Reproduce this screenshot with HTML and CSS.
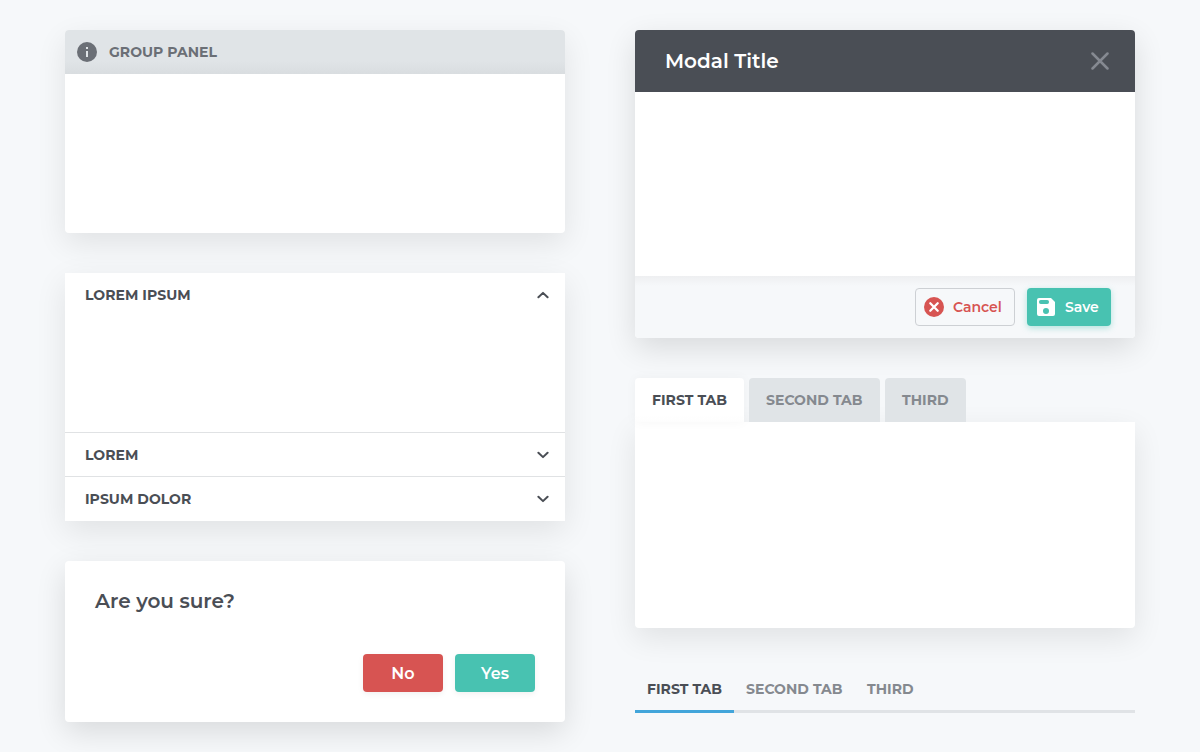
FILE: index.html
```html
<!DOCTYPE html>
<html lang="en">
<head>
<meta charset="utf-8">
<title>Panels</title>
<link rel="stylesheet" href="styles.css">
</head>
<body>
<main class="board">
  <div class="column">
    <section class="card group">
      <header class="group-head">
        <svg class="info" width="20" height="20" viewBox="0 0 20 20"><circle cx="10" cy="10" r="10" fill="#6b6f76"/><path d="M9 5h2v2H9zM9 9h2v6H9z" fill="#e0e4e7"/></svg>
        <span class="label">GROUP PANEL</span>
      </header>
    </section>
    <section class="card accordion">
      <div class="row open"><span class="label">LOREM IPSUM</span><svg width="12" height="8" viewBox="0 0 12 8"><path class="chev" d="M1.400 6.300 6 1.900l4.600 4.400"/></svg></div>
      <div class="row"><span class="label">LOREM</span><svg width="12" height="8" viewBox="0 0 12 8"><path class="chev" d="M1.400 1.700 6 6.100l4.600-4.400"/></svg></div>
      <div class="row"><span class="label">IPSUM DOLOR</span><svg width="12" height="8" viewBox="0 0 12 8"><path class="chev" d="M1.400 1.700 6 6.100l4.600-4.400"/></svg></div>
    </section>
    <section class="card raised confirm">
      <h2 class="title">Are you sure?</h2>
      <div class="actions">
        <button class="btn answer red">No</button>
        <button class="btn answer green">Yes</button>
      </div>
    </section>
  </div>
  <div class="column">
    <section class="card raised modal">
      <header class="modal-head">
        <h2 class="title">Modal Title</h2>
        <svg width="18" height="18" viewBox="0 0 18 18"><path d="M1.500 1.500l15 15M16.500 1.500l-15 15" stroke="#858991" stroke-width="2.500" stroke-linecap="round"/></svg>
      </header>
      <div class="modal-body"></div>
      <footer class="modal-foot">
        <button class="btn cancel">
          <svg width="20" height="20" viewBox="0 0 20 20"><circle cx="10" cy="10" r="10" fill="#d75452"/><path d="M6.300 6.300l7.400 7.400M13.700 6.300l-7.400 7.400" stroke="#fff" stroke-width="2.300" stroke-linecap="round"/></svg>
          <span>Cancel</span>
        </button>
        <button class="btn save">
          <svg width="18" height="18" viewBox="0 0 18 18"><path fill="#fff" fill-rule="evenodd" d="M2 0h12l4 4v12a2 2 0 0 1-2 2H2a2 2 0 0 1-2-2V2a2 2 0 0 1 2-2zM3.800 2a1.800 1.800 0 0 0-1.800 1.900v.2A1.800 1.800 0 0 0 3.800 6h6.400A1.800 1.800 0 0 0 12 4.100v-.2A1.800 1.800 0 0 0 10.200 2zM9 10a3 3 0 1 0 0 6 3 3 0 0 0 0-6z"/></svg>
          <span>Save</span>
        </button>
      </footer>
    </section>
    <section class="tabset">
      <nav class="tabs">
        <div class="tab first active"><span class="label">FIRST TAB</span></div>
        <div class="tab second"><span class="label">SECOND TAB</span></div>
        <div class="tab third"><span class="label">THIRD</span></div>
      </nav>
      <div class="card tab-panel"></div>
    </section>
    <nav class="line-tabs">
      <div class="line-tab active"><span class="label">FIRST TAB</span></div>
      <div class="line-tab wide"><span class="label">SECOND TAB</span></div>
      <div class="line-tab"><span class="label">THIRD</span></div>
    </nav>
  </div>
</main>
</body>
</html>
```
FILE: styles.css
```css
* { box-sizing: border-box; }
body {
  margin: 0;
  height: 752px;
  overflow: hidden;
  background: #f6f8fa;
  color: #4a4e55;
  font-family: Montserrat, Inter, sans-serif;
}
svg { display: block; flex: none; }
span { white-space: nowrap; }
.board { display: flex; gap: 70px; padding: 30px 65px; }
.column { display: flex; flex-direction: column; gap: 40px; width: 500px; }
.card { background: #fff; border-radius: 4px; box-shadow: 0 10px 30px rgba(0, 0, 0, .09); }
.raised { box-shadow: 0 10px 30px rgba(0, 0, 0, .12); }
.label { font-size: 14px; font-weight: 700; line-height: 20px; letter-spacing: .03px; }

.group { height: 203px; }
.group-head {
  display: flex; align-items: center; gap: 12px;
  height: 44px; padding: 0 12px;
  border-radius: 4px 4px 0 0;
  background: linear-gradient(#e0e4e7 70%, #d9dde0);
  color: #6b6f76;
}

.accordion { height: 248px; border-radius: 0; }
.row {
  display: flex; justify-content: space-between; align-items: center;
  height: 44px; padding: 0 16px 0 20px;
  border-top: 1px solid #e0e2e4;
}
.row.open { height: 159px; align-items: flex-start; border: 0; padding-top: 12px; }
.row.open svg { margin-top: 6px; }
.chev { fill: none; stroke: #4a4e55; stroke-width: 2; stroke-linecap: round; stroke-linejoin: round; }

.confirm {
  display: flex; flex-direction: column; justify-content: space-between;
  height: 161px; padding: 25px 30px 30px;
}
.title { margin: 0; font-size: 20px; font-weight: 600; line-height: 30px; }
.actions { display: flex; justify-content: flex-end; gap: 12px; }
.btn {
  display: flex; align-items: center;
  height: 38px; border: 0; border-radius: 4px;
  color: #fff; font: 600 14px/20px Montserrat, Inter, sans-serif;
}
.answer { justify-content: center; width: 80px; padding: 1px 0 0; font-size: 16px; box-shadow: 0 2px 6px rgba(0, 0, 0, .06); }
.red { background: #d75452; }
.green { background: #48c2b1; }

.modal { height: 308px; display: flex; flex-direction: column; overflow: hidden; }
.modal-head {
  display: flex; justify-content: space-between; align-items: center;
  height: 62px; padding: 0 26px 0 30px;
  background: #4a4e55; color: #fff;
}
.modal-body { flex: 1; }
.modal-foot {
  display: flex; justify-content: flex-end; align-items: center; gap: 12px;
  height: 62px; padding: 0 24px;
  background: linear-gradient(#eeeff1, #f6f8fa 10px);
}
.cancel { width: 100px; padding: 0 8px; gap: 9px; background: #f6f8fa; border: 1px solid #cdd0d4; color: #d75452; }
.save { width: 84px; padding: 0 10px; gap: 10px; background: #48c2b1; box-shadow: 0 2px 6px rgba(72, 194, 177, .4); }

.tabs { display: flex; gap: 5px; height: 44px; }
.tab {
  display: flex; align-items: center; padding: 0 17px;
  border-radius: 4px 4px 0 0;
  background: #e0e4e7; color: #85898f;
}
.tab.first { width: 109px; }
.tab.second { width: 131px; }
.tab.third { width: 81px; }
.tab.active { background: linear-gradient(#fff 85%, #fdfdfd); color: #4a4e55; box-shadow: 0 0 12px rgba(0, 0, 0, .04); }
.tab-panel { height: 206px; border-radius: 0 0 4px 4px; }

.line-tabs { display: flex; height: 45px; border-bottom: 3px solid #e0e3e6; color: #85898f; }
.line-tab { padding: 11px 12px 0; height: 45px; }
.line-tab.active { width: 99px; color: #4a4e55; border-bottom: 3px solid #42a5da; }
.line-tab.wide { width: 121px; }
```
